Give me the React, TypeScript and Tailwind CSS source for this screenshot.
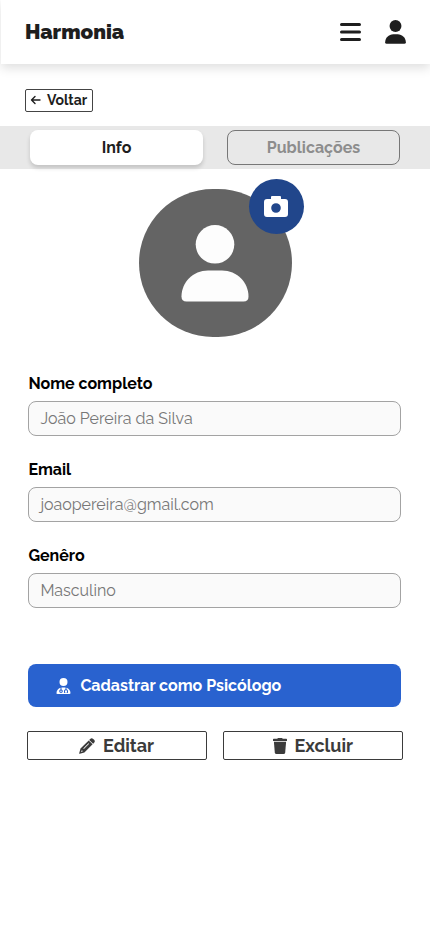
import React from "react";
import { FaUserDoctor } from "react-icons/fa6";

function Person({ className }: { className: string }) {
  return (
    <svg viewBox="0 0 68 77" className={className} fill="currentColor">
      <circle cx="34" cy="19.3" r="19.3" />
      <path d="M27 45.5H41C56 45.5 67.5 57.5 67.5 71.5Q67.5 76.5 62.5 76.5H5.5Q.5 76.5 .5 71.5C.5 57.5 12 45.5 27 45.5Z" />
    </svg>
  );
}

function Pencil() {
  return (
    <svg viewBox="0 0 16 16" className="size-4 shrink-0" fill="currentColor">
      <path d="M11.2.9Q12.7-.5 14.2.9L15.1 1.8Q16.5 3.3 15.1 4.8L14.1 5.8L10.2 1.9Z" />
      <path
        fillRule="evenodd"
        d="M9.7 2.4L13.6 6.3L5.4 14.5L.8 15.8Q0 16 .2 15.2L1.5 10.6ZM9.5 5.2L4.3 10.4L4.9 11L10.1 5.8ZM2.5 12.4L2.1 13.9L3.6 13.5L3.5 12.5Z"
      />
    </svg>
  );
}

function Trash() {
  return (
    <svg viewBox="0 0 14 16" className="h-4 w-[14px] shrink-0" fill="currentColor">
      <path d="M5 0H9L9.8 .8H13.3Q14 .8 14 1.6V3H0V1.6Q0 .8 .7 .8H4.2Z" />
      <path d="M.9 3.8H13.1L12.2 14.5Q12 16 10.6 16H3.4Q2 16 1.8 14.5Z" />
    </svg>
  );
}

function Field({ label, value }: { label: string; value: string }) {
  return (
    <div className="flex h-[86px] flex-col">
      <label className="h-[27px] text-base leading-[20px] font-bold whitespace-nowrap text-black">{label}</label>
      <div className="flex h-[35px] w-[373px] items-center rounded-lg border border-[#a3a3a3] bg-[#fafafa] pl-[11px] text-base whitespace-nowrap text-[#777]">
        {value}
      </div>
    </div>
  );
}

export default function App() {
  return (
    <div className="flex h-[942px] w-[430px] flex-col overflow-hidden bg-white font-['Raleway','Lato',sans-serif] text-[#1e1e1e]">
      <header className="ml-px flex h-16 shrink-0 items-center justify-between bg-white pr-[24px] pl-[24px] shadow-[0_4px_10px_rgba(0,0,0,0.13)]">
        <h1 className="text-[20.6px] leading-none font-black">Harmonia</h1>
        <div className="flex items-center gap-6">
          <svg className="h-[19px] w-[21px]" viewBox="0 0 21 19" stroke="currentColor" strokeWidth="3" strokeLinecap="round">
            <path d="M1.5 1.5H19.5M1.5 9H19.5M1.5 16.5H19.5" />
          </svg>
          <Person className="h-6 w-[21px]" />
        </div>
      </header>
      <button className="mt-[25px] ml-[25px] flex h-[23px] w-[68px] shrink-0 items-center gap-[6px] rounded-[2px] border border-[#444] pb-[2px] pl-[4px] text-sm font-bold">
        <svg className="h-[10px] w-[11px]" viewBox="0 0 11 10" fill="none" stroke="currentColor" strokeWidth="1.4" strokeLinecap="round" strokeLinejoin="round">
          <path d="M10 5H1.5M5 1.5L1.5 5L5 8.5" />
        </svg>
        <span className="leading-none">Voltar</span>
      </button>
      <nav className="mt-[14px] flex h-[43px] shrink-0 items-center gap-6 bg-[#e8e8e8] pl-[30px] text-base font-bold">
        <button className="h-[35px] w-[173px] rounded-lg bg-white shadow-[0_3px_4px_rgba(0,0,0,0.16)]">Info</button>
        <button className="h-[35px] w-[173px] rounded-lg border border-[#777] text-[#8d8d8d]">Publicações</button>
      </nav>
      <div className="relative mt-5 flex h-[148px] w-[153px] shrink-0 justify-center self-center rounded-full bg-[#646464] pt-[36px]">
        <Person className="h-[77px] w-[68px] text-[#fdfdfd]" />
        <div className="absolute -top-[10px] left-[110px] flex size-[55px] items-center justify-center rounded-full bg-[#21468b]">
          <svg className="h-[21px] w-6" viewBox="0 0 24 21">
            <path fill="white" fillRule="evenodd" d="M8 0H16Q17 0 17 1V3H21Q24 3 24 6V18Q24 21 21 21H3Q0 21 0 18V6Q0 3 3 3H7V1Q7 0 8 0ZM12 7.2A4.8 4.8 0 1 0 12 16.8A4.8 4.8 0 0 0 12 7.2Z" />
          </svg>
        </div>
      </div>
      <section className="mt-[37px] ml-[28.4px] flex h-[290px] shrink-0 flex-col">
        <Field label="Nome completo" value="João Pereira da Silva" />
        <Field label="Email" value="joaopereira@gmail.com" />
        <Field label="Genêro" value="Masculino" />
      </section>
      <button className="ml-[28.4px] flex h-[43px] w-[373px] shrink-0 items-center gap-[9px] rounded-lg bg-[#2962cf] pl-[28px] text-base font-bold text-white">
        <FaUserDoctor className="h-4 w-[15px]" />
        <span>Cadastrar como Psicólogo</span>
      </button>
      <div className="mt-6 ml-[27px] flex shrink-0 gap-4 text-lg font-bold text-[#3b3b3b]">
        <button className="flex h-[29px] w-[180px] items-center gap-[8px] rounded-[2px] border border-[#3b3b3b] pl-[51px]">
          <Pencil />
          <span>Editar</span>
        </button>
        <button className="flex h-[29px] w-[180px] items-center gap-[8px] rounded-[2px] border border-[#3b3b3b] pl-[48.5px]">
          <Trash />
          <span>Excluir</span>
        </button>
      </div>
    </div>
  );
}
